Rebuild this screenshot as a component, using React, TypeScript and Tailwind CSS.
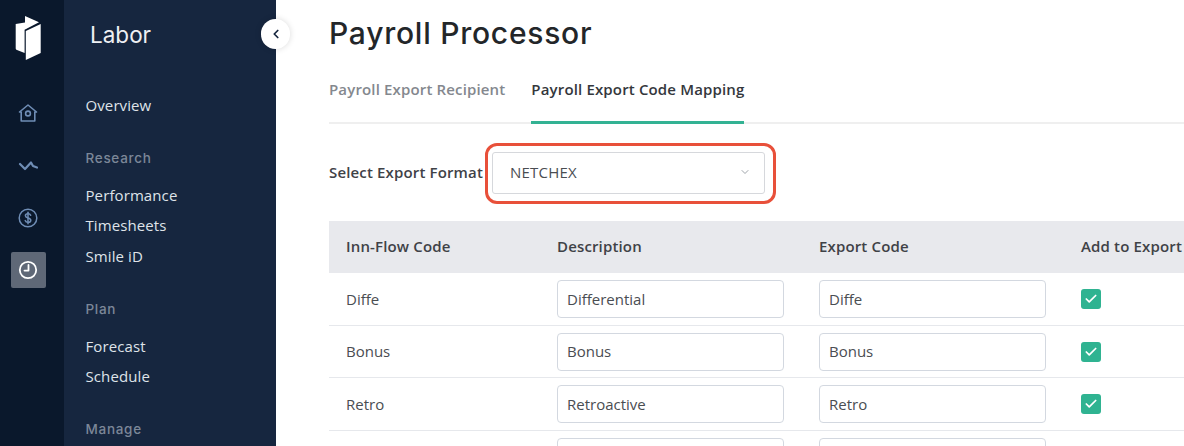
import React from "react";
import { ChevronDown, ChevronLeft, Check } from "lucide-react";

const body = "font-['Open_Sans','Noto_Sans',sans-serif]";
const heading = "font-['Inter','Open_Sans',sans-serif]";

const rows = [
    { code: "Diffe", description: "Differential", exportCode: "Diffe" },
    { code: "Bonus", description: "Bonus", exportCode: "Bonus" },
    { code: "Retro", description: "Retroactive", exportCode: "Retro" },
    { code: "", description: "", exportCode: "" },
];

function NavLink({ label }: { label: string }) {
    return <a className="block h-[30.7px] leading-[30.7px] text-[15px] text-[#dfe3e9] tracking-[0.1px]">{label}</a>;
}

function NavHeading({ label }: { label: string }) {
    return <div className={`${heading} text-[13.5px] font-medium leading-[20px] tracking-[0.7px] text-[#7c8798]`}>{label}</div>;
}

function Logo() {
    return (
        <svg width="28" height="46" viewBox="0 0 28 46" fill="#ffffff">
            <path d="M1.7 9 L11 7.5 L11 1 L25 7.2 L10.6 14.8 L10.6 38 L3 35 Q1.7 34.5 1.7 33.5 Z" />
            <path d="M11.8 16 L26.7 9 L26.7 38 L11.8 45 Z" />
        </svg>
    );
}

function RailIcons() {
    return (
        <div className="flex flex-col items-center">
            <div className="h-[40px] flex items-center justify-center">
                <svg width="20" height="20" viewBox="0 0 20 20" fill="none" stroke="#6f8db5" strokeWidth="1.6" strokeLinejoin="round">
                    <path d="M1.5 9 L10 2 L18.5 9 L16.8 9 L16.8 18 L3.2 18 L3.2 9 Z" />
                    <circle cx="10" cy="10.5" r="2.4" />
                </svg>
            </div>
            <div className="h-[24px] mt-[21px] flex items-center justify-center">
                <svg width="20" height="12" viewBox="0 0 20 12" fill="none" stroke="#6f8db5" strokeWidth="2.2" strokeLinecap="round" strokeLinejoin="round">
                    <path d="M2 4 L7 9 L13 2.5 L15 6 L19 7.5" />
                </svg>
            </div>
            <div className="h-[24px] mt-[28px] flex items-center justify-center">
                <svg width="20" height="20" viewBox="0 0 20 20" fill="none" stroke="#6f8db5" strokeWidth="1.5" strokeLinecap="round">
                    <circle cx="10" cy="10" r="8.8" />
                    <path d="M12.7 7.3 C12.2 6 11 5.7 10 5.7 C8.5 5.7 7.4 6.5 7.4 7.8 C7.4 10.6 12.8 9.2 12.8 12.2 C12.8 13.5 11.6 14.3 10 14.3 C8.8 14.3 7.6 13.8 7.2 12.6" />
                    <path d="M10 4.2 L10 15.8" />
                </svg>
            </div>
            <div className="mt-[22px] w-[35px] h-[36px] rounded-[2px] bg-[#5f6877] flex items-center justify-center">
                <svg width="20" height="20" viewBox="0 0 20 20" fill="none" stroke="#ffffff" strokeWidth="1.8" strokeLinecap="round" strokeLinejoin="round">
                    <circle cx="10" cy="10" r="8.2" />
                    <path d="M10.5 5 L10.5 10.6 L6.5 10.6" />
                </svg>
            </div>
        </div>
    );
}

function Field({ value }: { value: string }) {
    return (
        <div className="w-[227px] h-[38px] rounded-[4px] border border-[#d3d8e0] bg-white px-[9px] flex items-center text-[15px] text-[#4a4d52]">
            {value}
        </div>
    );
}

export default function App() {
    return (
        <div className={`${body} relative h-screen w-full overflow-hidden bg-white flex`}>
            {/* icon rail */}
            <aside className="w-[64px] shrink-0 bg-[#0a182c] flex flex-col items-center pr-[8px]">
                <div className="pt-[15px] pb-[32px]">
                    <Logo />
                </div>
                <RailIcons />
            </aside>

            {/* section nav */}
            <nav className="w-[212px] shrink-0 bg-[#16263f] pl-[21.5px]">
                <div className={`${heading} pl-[4.5px] pt-[20px] text-[22.5px] leading-[30px] text-[#eef0f3]`}>Labor</div>
                <div className="mt-[40px]">
                    <NavLink label="Overview" />
                </div>
                <div className="mt-[27px] mb-[12px]">
                    <NavHeading label="Research" />
                </div>
                <NavLink label="Performance" />
                <NavLink label="Timesheets" />
                <NavLink label="Smile iD" />
                <div className="mt-[27px] mb-[12px]">
                    <NavHeading label="Plan" />
                </div>
                <NavLink label="Forecast" />
                <NavLink label="Schedule" />
                <div className="mt-[27px]">
                    <NavHeading label="Manage" />
                </div>
            </nav>

            {/* collapse button */}
            <button className="absolute left-[261px] top-[19px] w-[29px] h-[30px] rounded-full bg-white shadow-[0_0_6px_rgba(0,0,0,0.15)] flex items-center justify-center">
                <ChevronLeft size={14} strokeWidth={3} className="text-[#16263f]" />
            </button>

            {/* main */}
            <main className="flex-1 min-w-0 pl-[53px]">
                <h1 className={`${heading} pt-[13px] text-[30px] leading-[40px] font-medium tracking-[0.75px] text-[#232629]`}>Payroll Processor</h1>

                <div className="mt-[17px] h-[54px] border-b-2 border-[#efefef] flex gap-[26px] text-[15px] tracking-[0.15px] font-semibold">
                    <div className="h-[54px] pt-[9px] leading-[20px] text-[#84888e]">Payroll Export Recipient</div>
                    <div className="h-[54px] pt-[9px] leading-[20px] text-[#34373c] border-b-[3px] border-[#33b293]">Payroll Export Code Mapping</div>
                </div>

                <div className="mt-[28px] flex items-center">
                    <label className="w-[163px] pb-[2px] text-[15px] tracking-[0.15px] font-semibold text-[#3f4247]">Select Export Format</label>
                    <div className="relative">
                        <div className="w-[273px] h-[42px] pb-[2px] rounded-[3px] border border-[#d6d8dc] bg-white pl-[17px] pr-[13px] flex items-center justify-between text-[15px] tracking-[0.2px] text-[#4a4d52]">
                            NETCHEX
                            <ChevronDown size={12} strokeWidth={1.5} className="text-[#7f858d]" />
                        </div>
                        <div className="absolute -left-[7px] -right-[11px] -top-[9px] -bottom-[10px] rounded-[12px] border-[3px] border-[#e8503a]" />
                    </div>
                </div>

                <div className="mt-[27px] w-[900px] text-[15px]">
                    <div className="h-[52px] pb-[2px] bg-[#e8e9ed] flex items-center font-semibold tracking-[0.15px] text-[#3f4247]">
                        <div className="w-[228px] pl-[17px]">Inn-Flow Code</div>
                        <div className="w-[262px]">Description</div>
                        <div className="w-[262px]">Export Code</div>
                        <div className="flex-1">Add to Export</div>
                    </div>
                    {rows.map((row, i) => (
                        <div key={i} className="h-[52.7px] border-b border-[#e6e8ec] flex items-center text-[#4a4d52]">
                            <div className="w-[228px] pl-[17px]">{row.code}</div>
                            <div className="w-[262px]"><Field value={row.description} /></div>
                            <div className="w-[262px]"><Field value={row.exportCode} /></div>
                            <div className="flex-1">
                                <span className="w-[20px] h-[20px] rounded-[3px] bg-[#2fb391] flex items-center justify-center">
                                    <Check size={14} strokeWidth={3} className="text-white" />
                                </span>
                            </div>
                        </div>
                    ))}
                </div>
            </main>
        </div>
    );
}
